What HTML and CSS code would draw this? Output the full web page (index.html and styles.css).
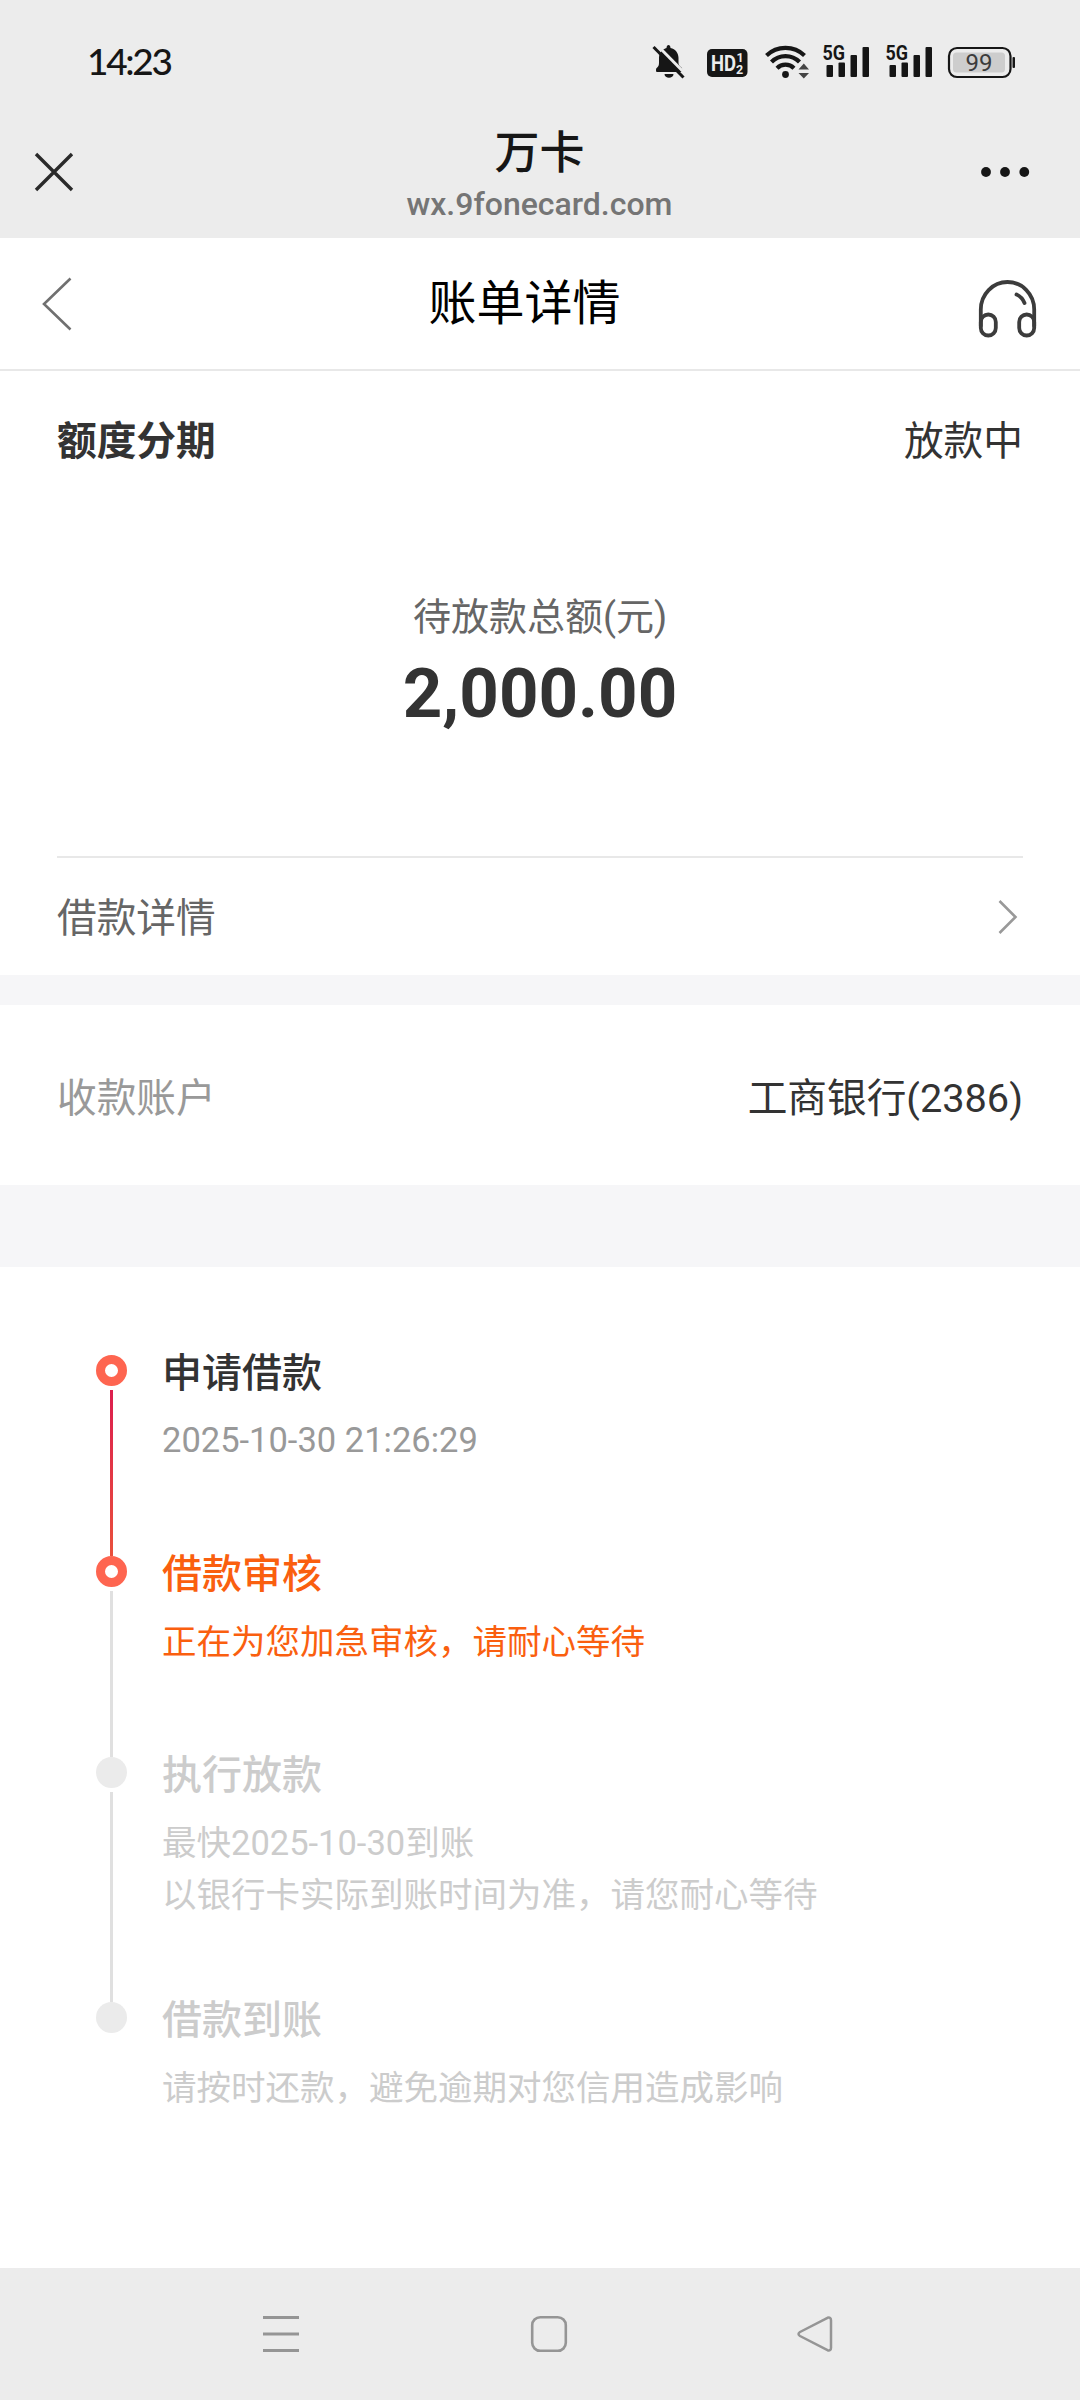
FILE: index.html
```html
<!DOCTYPE html>
<html lang="zh-CN">
<head>
<meta charset="utf-8">
<title>账单详情</title>
<link rel="stylesheet" href="styles.css">
</head>
<body>
<div class="screen">
  <header class="chrome">
    <div class="status">
      <span class="time">14:23</span>
      <svg class="status-icons" width="368" height="40" viewBox="650 40 368 40">
        <g fill="#161616">
          <path d="M656 70c0-3 3-2 3-7v-5c0-6 4-9 7.500-10 0-4 4-4 4 0 5 1 8 5 8 10v5c0 4 4 3 4 8 0 1-.5 1-1.500 1h-24c-.6 0-1-.5-1-2zM664.500 74h9c0 5-9 5-9 0z"/>
          <path d="M655.500 43.500L687 75.500" stroke="#ececec" stroke-width="3"/>
          <path d="M653.500 47L683.500 77.500" stroke="#161616" stroke-width="3"/>
          <rect x="707" y="49" width="40.500" height="28" rx="5"/>
        </g>
        <g class="hd">
          <text x="711" y="71" font-size="22" textLength="25" lengthAdjust="spacingAndGlyphs">HD</text>
          <text x="736.500" y="61.500" font-size="12.500">1</text>
          <text x="736" y="74" font-size="12.500">2</text>
        </g>
        <g fill="none" stroke="#161616" stroke-width="4.200">
          <path d="M766.500 55.500a27.500 27.500 0 0 1 38 0"/>
          <path d="M771.500 62a19.500 19.500 0 0 1 28 0"/>
          <path d="M777 68.200a12 12 0 0 1 17 0"/>
        </g>
        <circle cx="785.500" cy="74.500" r="3.400" fill="#161616"/>
        <path d="M798.500 69.500h10.500l-5.200-6zM798.500 73h10.500l-5.200 5.500z" fill="#444"/>
        <g fill="#161616">
          <rect x="826.500" y="65" width="6.500" height="12" rx="1"/><rect x="838.500" y="62.500" width="6.500" height="14.500" rx="1"/><rect x="850.500" y="55" width="6.500" height="22" rx="1"/><rect x="862.500" y="47" width="6.500" height="30" rx="1"/>
          <rect x="889.500" y="65" width="6.500" height="12" rx="1"/><rect x="901.500" y="62.500" width="6.500" height="14.500" rx="1"/><rect x="913.500" y="55" width="6.500" height="22" rx="1"/><rect x="925.500" y="47" width="6.500" height="30" rx="1"/>
        </g>
        <g class="gen">
          <text x="822.500" y="60" font-size="20.500" textLength="22.500" lengthAdjust="spacingAndGlyphs">5G</text>
          <text x="885.500" y="60" font-size="20.500" textLength="22.500" lengthAdjust="spacingAndGlyphs">5G</text>
        </g>
        <rect x="949" y="48" width="61.500" height="29" rx="8" fill="none" stroke="#161616" stroke-width="2.200"/>
        <rect x="953" y="52.500" width="52" height="20" rx="3.500" fill="#cdcdcd"/>
        <rect x="1012.500" y="57" width="2.500" height="11" rx="1" fill="#161616"/>
        <text class="pct" x="965.500" y="71" font-size="23.500" textLength="27" lengthAdjust="spacingAndGlyphs">99</text>
      </svg>
    </div>
    <div class="titlebar">
      <svg width="40" height="40" viewBox="0 0 40 40"><path d="M2 2L38 38M38 2L2 38" stroke="#2a2a2a" stroke-width="3.400" fill="none"/></svg>
      <div class="titles">
        <div class="app-name">万卡</div>
        <div class="host">wx.9fonecard.com</div>
      </div>
      <svg width="50" height="12" viewBox="0 0 50 12"><g fill="#161616"><circle cx="6" cy="6" r="4.900"/><circle cx="25" cy="6" r="4.900"/><circle cx="44.300" cy="6" r="4.900"/></g></svg>
    </div>
  </header>

  <nav class="navbar">
    <svg width="30" height="54" viewBox="0 0 30 54"><path d="M28.500 1.500L2 27L28.500 52.500" stroke="#707070" stroke-width="2.600" fill="none"/></svg>
    <h1 class="nav-title">账单详情</h1>
    <svg class="service" width="60" height="60" viewBox="0 0 60 60"><g fill="none" stroke="#3c3c3c" stroke-width="3.800" stroke-linecap="round"><path d="M3.800 47V30.500a26.700 27.500 0 0 1 53.400 0V47"/><rect x="3.800" y="35.500" width="15" height="21" rx="7.500"/><rect x="42.200" y="35.500" width="15" height="21" rx="7.500"/><path d="M39.500 15.500Q45 18 47.500 24"/></g></svg>
  </nav>

  <section class="bill">
    <div class="bill-head"><strong>额度分期</strong><span>放款中</span></div>
    <div class="amount">
      <div class="amount-label">待放款总额(元)</div>
      <div class="amount-value">2,000.00</div>
    </div>
    <div class="detail-row">
      <span>借款详情</span>
      <svg width="20" height="36" viewBox="0 0 20 36"><path d="M1.500 2L17.500 18L1.500 34" stroke="#999" stroke-width="2.600" fill="none"/></svg>
    </div>
  </section>

  <section class="account"><span class="account-label">收款账户</span><span>工商银行(2386)</span></section>

  <ol class="steps">
    <li class="step done">
      <i class="dot"></i><i class="line"></i>
      <div class="body"><h2>申请借款</h2><p>2025-10-30 21:26:29</p></div>
    </li>
    <li class="step current">
      <i class="dot"></i><i class="line"></i>
      <div class="body"><h2>借款审核</h2><p>正在为您加急审核，请耐心等待</p></div>
    </li>
    <li class="step two-line">
      <i class="dot"></i><i class="line"></i>
      <div class="body"><h2>执行放款</h2><p>最快2025-10-30到账<br>以银行卡实际到账时间为准，请您耐心等待</p></div>
    </li>
    <li class="step">
      <i class="dot"></i>
      <div class="body"><h2>借款到账</h2><p>请按时还款，避免逾期对您信用造成影响</p></div>
    </li>
  </ol>

  <footer class="sysnav">
    <svg width="38" height="38" viewBox="0 0 38 38"><path d="M1 2.500h36M1 19h36M1 35.500h36" stroke="#959595" stroke-width="3"/></svg>
    <svg class="home" width="38" height="38" viewBox="0 0 38 38"><rect x="2.200" y="2.200" width="33.600" height="33.600" rx="8" fill="none" stroke="#959595" stroke-width="2.600"/></svg>
    <svg width="38" height="38" viewBox="0 0 38 38"><path d="M31.500 2.800L4 17q-3 2 0 4L31.500 35.200q3.500 1 3.500-2.500V5.300q0-3.500-3.500-2.500z" fill="none" stroke="#959595" stroke-width="2.500" stroke-linejoin="round"/></svg>
  </footer>
</div>
</body>
</html>
```
FILE: styles.css
```css
* { box-sizing: border-box; margin: 0; padding: 0; }
body { background: #fff; font-family: Roboto, "Noto Sans CJK SC", sans-serif; color: #333; }
svg { display: block; flex: none; }
.screen { width: 1080px; height: 2400px; display: flex; flex-direction: column; overflow: hidden; }

.chrome { height: 238px; background: #ececec; flex: none; }
.status { height: 120px; padding: 40px 62px 0 87px; display: flex; justify-content: space-between; }
.time { font: 500 37px/42px Lato, sans-serif; color: #161616; letter-spacing: -2.300px; }
.hd { font-family: Roboto, sans-serif; font-weight: 700; fill: #ececec; }
.gen { font-family: Roboto, sans-serif; font-weight: 700; fill: #161616; }
.pct { font-family: Roboto, sans-serif; fill: #3c3c3c; }
.titlebar { height: 118px; padding: 0 50px 0 34px; display: flex; justify-content: space-between; align-items: flex-start; }
.titlebar > svg:first-child { margin-top: 32px; }
.titlebar > svg:last-child { margin-top: 46px; }
.titles { flex: 1; margin-left: 25px; padding-top: 2px; text-align: center; }
.app-name { font-size: 45px; line-height: 64px; font-weight: 500; color: #161616; }
.host { font-size: 32px; line-height: 36px; font-weight: 500; color: #757575; }

.navbar { height: 133px; flex: none; border-bottom: 2px solid #e8e8e8; padding: 0 43px 0 42px; display: flex; align-items: center; justify-content: space-between; }
.nav-title { font-size: 48px; line-height: 60px; font-weight: 400; color: #000; }
.navbar > .service { margin: 10px 0 0; }

.bill { height: 604px; flex: none; padding: 0 57px; font-size: 39.700px; }
.bill-head { height: 133px; display: flex; justify-content: space-between; align-items: center; }
.amount { height: 352px; padding-top: 88px; text-align: center; }
.amount-label { font-size: 38px; line-height: 50px; color: #666; }
.amount-value { font-size: 69px; line-height: 80px; font-weight: 700; margin-top: 12px; }
.detail-row { height: 119px; border-top: 2px solid #e8e8e8; display: flex; align-items: center; justify-content: space-between; color: #666; }
.detail-row span { margin-bottom: 5px; }
.detail-row svg { margin-right: 5px; }

.account { height: 292px; flex: none; border: solid #f6f6f8; border-width: 30px 0 82px; padding: 0 57px 2px; display: flex; align-items: center; justify-content: space-between; font-size: 39.700px; }
.account-label { color: #999; }

.steps { flex: 1; list-style: none; padding: 81px 96px 0; }
.step { height: 201px; display: grid; grid-template-columns: 31px 1fr; grid-template-rows: 42px 1fr; column-gap: 35px; color: #ccc; }
.two-line { height: 245px; }
.dot { grid-area: 1 / 1; width: 31px; height: 31px; margin-top: 7px; border-radius: 50%; background: #ebebeb; }
.done .dot, .current .dot { background: #fff; border: 9.500px solid #fe6550; }
.line { grid-area: 2 / 1; width: 3px; justify-self: center; background: #e0e0e0; margin-bottom: -7px; }
.done .line { background: linear-gradient(#dc1e4e, #e9503c); }
.body { grid-area: 1 / 2 / 3 / 3; padding-top: 1px; }
.body h2 { font-size: 40px; line-height: 50px; font-weight: 500; }
.body p { font-size: 34.500px; line-height: 52px; margin-top: 16px; white-space: nowrap; }
.done h2 { color: #333; }
.done p { color: #999; margin-top: 15px; }
.current { color: #fa5f0f; }

.sysnav { height: 132px; flex: none; background: #ececec; padding: 0 246px 0 262px; display: flex; align-items: center; justify-content: space-between; }
.home { margin-left: 2px; }
```
